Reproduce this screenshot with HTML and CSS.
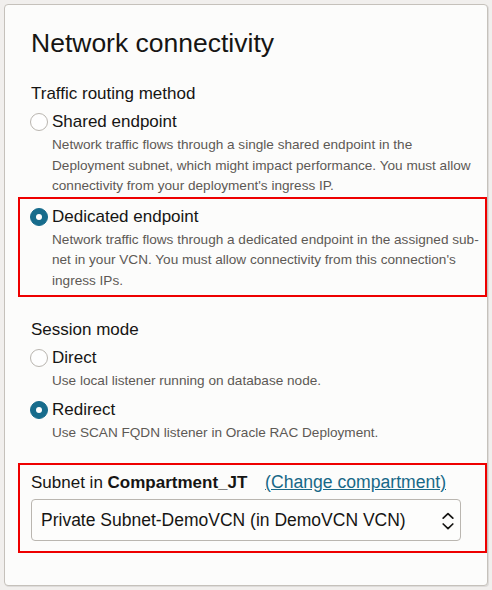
FILE: index.html
```html
<!DOCTYPE html>
<html lang="en">
<head>
<meta charset="utf-8">
<title>Network connectivity</title>
<link rel="stylesheet" href="styles.css">
</head>
<body>
<div class="card">
  <h1 class="title">Network connectivity</h1>

  <div class="group group-first">
    <div class="group-label">Traffic routing method</div>
    <div class="option">
      <span class="radio"></span>
      <span class="option-label">Shared endpoint</span>
    </div>
    <div class="desc">Network traffic flows through a single shared endpoint in the Deployment subnet, which might impact performance. You must allow connectivity from your deployment's ingress IP.</div>
    <div class="highlight highlight-a">
      <div class="option option-first">
        <span class="radio checked"></span>
        <span class="option-label">Dedicated endpoint</span>
      </div>
      <div class="desc">Network traffic flows through a dedicated endpoint in the assigned sub-net in your VCN. You must allow connectivity from this connection's ingress IPs.</div>
    </div>
  </div>

  <div class="group group-second">
    <div class="group-label">Session mode</div>
    <div class="option">
      <span class="radio"></span>
      <span class="option-label">Direct</span>
    </div>
    <div class="desc">Use local listener running on database node.</div>
    <div class="option option-next">
      <span class="radio checked"></span>
      <span class="option-label">Redirect</span>
    </div>
    <div class="desc">Use SCAN FQDN listener in Oracle RAC Deployment.</div>
  </div>

  <div class="highlight highlight-b">
    <div class="subnet-label">Subnet in <b>Compartment_JT</b> <a class="link" href="#">(Change compartment)</a></div>
    <div class="select">
      <span class="select-text">Private Subnet-DemoVCN (in DemoVCN VCN)</span>
      <svg class="select-icon" width="12" height="20" viewBox="0 0 12 20" aria-hidden="true">
        <path d="M1.2 8.2 L6 3.6 L10.8 8.2" fill="none" stroke="#161513" stroke-width="1.7" stroke-linecap="round" stroke-linejoin="round"/>
        <path d="M1.2 14 L6 18.6 L10.8 14" fill="none" stroke="#161513" stroke-width="1.7" stroke-linecap="round" stroke-linejoin="round"/>
      </svg>
    </div>
  </div>
</div>
</body>
</html>
```

FILE: styles.css
```css
* { box-sizing: border-box; }

html, body {
  margin: 0;
  background: #f1efed;
}

body {
  padding: 4px;
  font-family: "Liberation Sans", Arial, sans-serif;
  color: #161513;
}

.card {
  background: #fcfcfb;
  border: 1px solid #c5c1bb;
  border-radius: 4px;
  box-shadow: 1px 1px 0 rgba(0, 0, 0, 0.08);
  padding: 21.5px 2px 32.5px 26px;
}

.title {
  margin: 0;
  font-size: 26.5px;
  line-height: 32px;
  font-weight: normal;
  color: #161513;
}

.group-first { margin-top: 24.5px; }
.group-second { margin-top: 21.5px; }

.group-label {
  font-size: 17px;
  line-height: 22px;
}

.option {
  display: flex;
  align-items: center;
  gap: 4px;
  margin-top: 6px;
  margin-left: -1px;
  height: 22px;
}

.option-first { margin-top: 0; }
.option-next { margin-top: 8px; }

.radio {
  width: 18px;
  height: 18px;
  border-radius: 50%;
  border: 1px solid #b9b5af;
  background: #fefefe;
  flex: none;
  display: flex;
  align-items: center;
  justify-content: center;
}

.radio.checked {
  background: #176c8c;
  border-color: #176c8c;
}

.radio.checked::after {
  content: "";
  width: 6px;
  height: 6px;
  border-radius: 50%;
  background: #ffffff;
}

.option-label {
  font-size: 17px;
  line-height: 22px;
  color: #161513;
}

.desc {
  margin-top: 2px;
  padding-left: 21px;
  font-size: 13.6px;
  line-height: 20.5px;
  color: #5d5955;
}

.highlight {
  border: 2px solid #ee0000;
  margin-left: -13px;
  margin-right: -2px;
  padding-left: 11px;
  padding-right: 0;
}

.highlight-a {
  margin-top: 0.5px;
  padding-top: 6.5px;
  padding-bottom: 4px;
}

.highlight-b {
  margin-top: 19.5px;
  padding-top: 5.5px;
  padding-bottom: 9.5px;
}

.subnet-label {
  font-size: 17px;
  line-height: 22px;
  color: #161513;
}

.subnet-label b {
  font-weight: bold;
}

.link {
  margin-left: 13px;
  font-size: 17.6px;
  color: #176887;
  text-decoration: underline;
}

.select {
  margin-top: 5.5px;
  margin-right: 24px;
  height: 42px;
  border: 1px solid #bab6b0;
  border-radius: 4px;
  background: #fdfdfc;
  display: flex;
  align-items: center;
  justify-content: space-between;
  padding: 0 6px 0 9px;
}

.select-text {
  font-size: 17.5px;
  line-height: 22px;
  color: #161513;
}

.select-icon {
  flex: none;
  display: block;
}
```
